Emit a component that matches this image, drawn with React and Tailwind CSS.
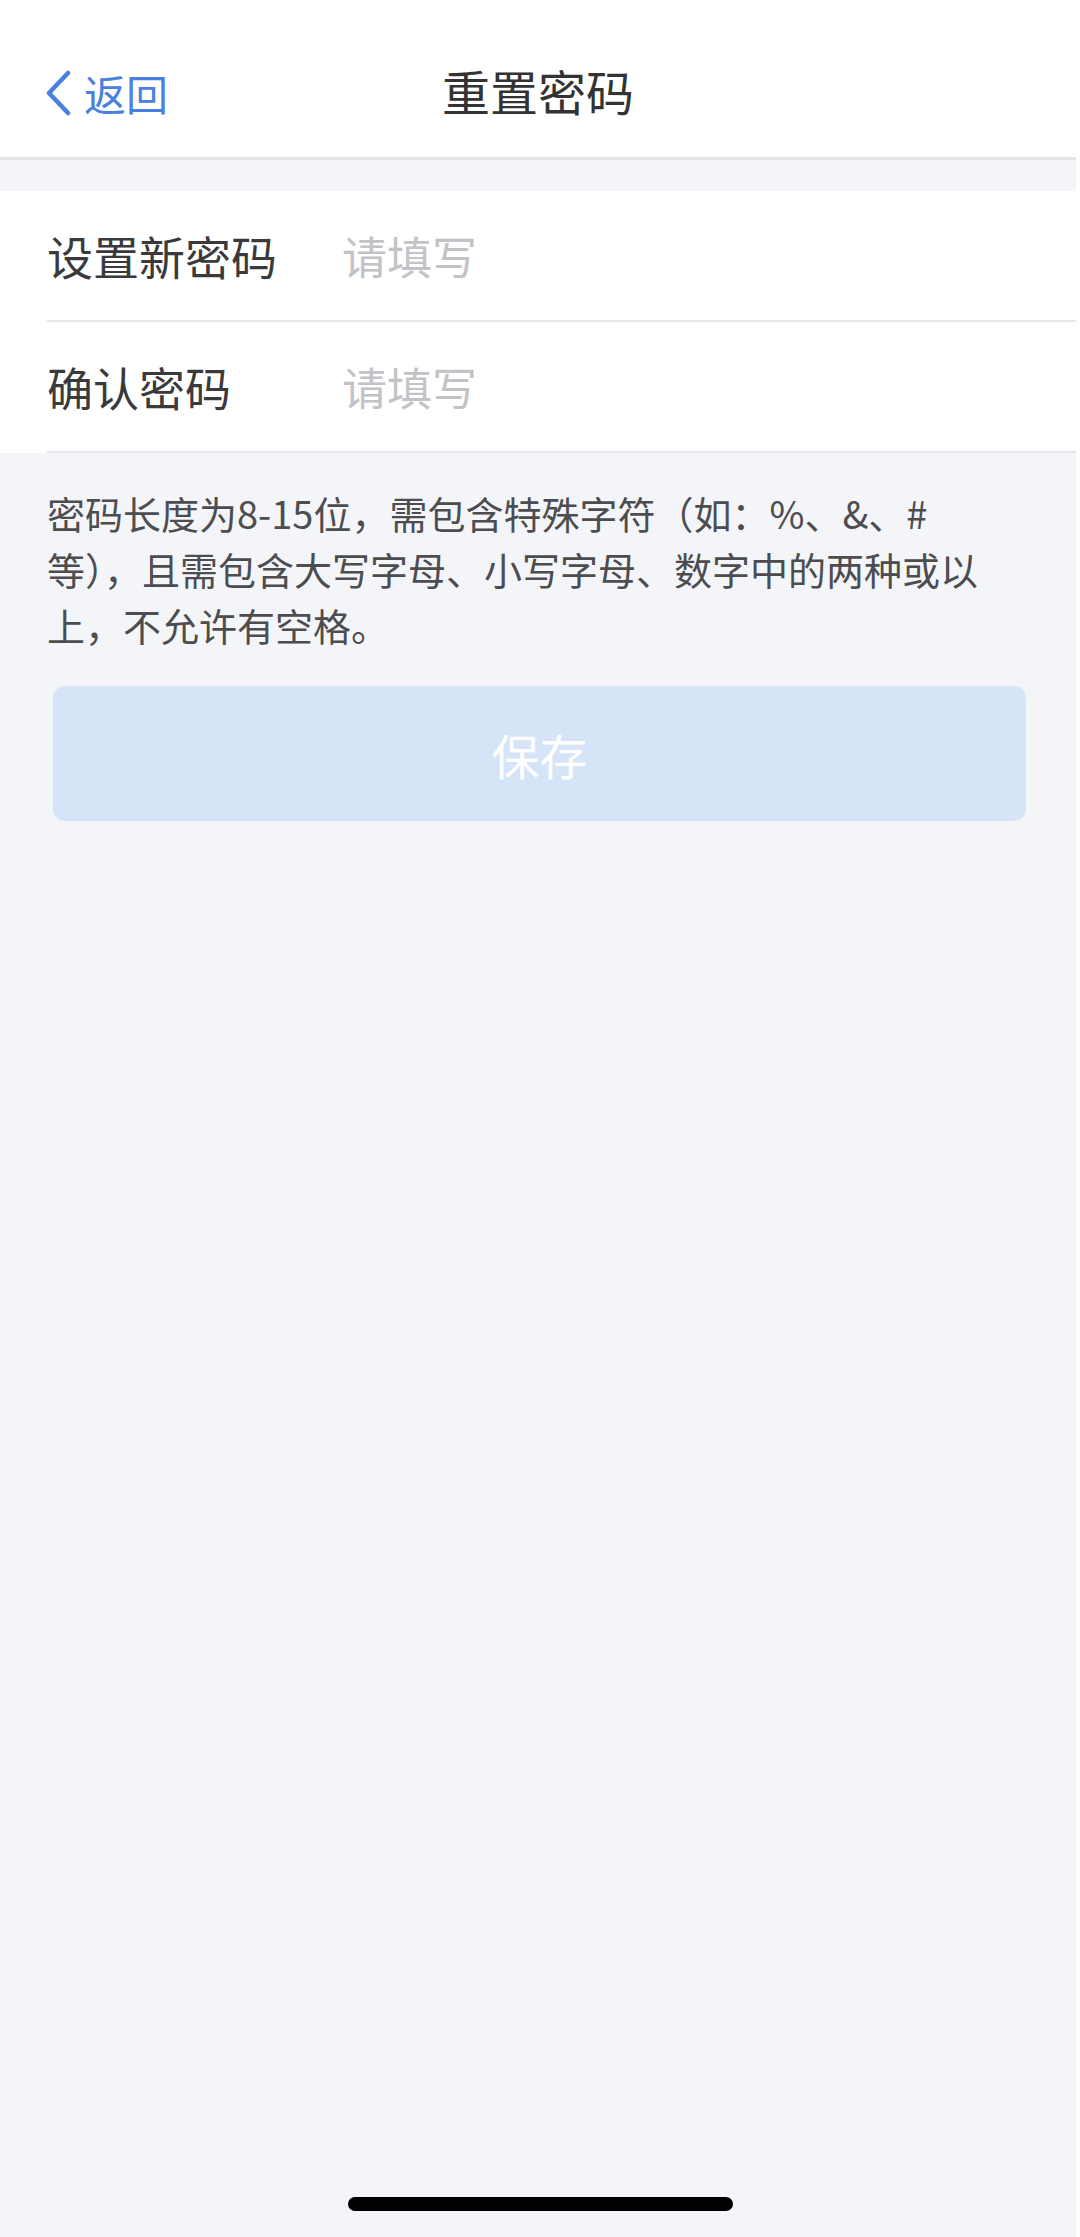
import React from 'react';

const font = { fontFamily: '"Noto Sans CJK SC", "Noto Sans", sans-serif' };

const Field = ({ label }) => (
  <div className="flex h-[131px] items-center pl-[47px]">
    <div className="flex h-full flex-1 items-center border-b-2 border-[#e6e7ea]">
      <span className="w-[295px] shrink-0 text-[46px] text-[#3a3a3c]">{label}</span>
      <input
        type="password"
        placeholder="请填写"
        className="min-w-0 flex-1 bg-transparent text-[45px] text-[#333] outline-none placeholder:text-[#c3c3c7]"
        style={font}
      />
    </div>
  </div>
);

const App = () => {
  return (
    <div className="flex min-h-[2237px] w-[1080px] bg-white" style={font}>
      <div className="flex w-[1076px] flex-col bg-[#f4f5f9]">
        {/* header */}
        <div className="relative flex h-[160px] shrink-0 items-center justify-center border-b-[3px] border-[#e3e4e8] bg-white pt-[22px]">
          <button className="absolute left-[44px] top-[70px] flex items-center gap-[12px] text-[#4a80e0]">
            <svg width="28" height="46" viewBox="0 0 28 46" fill="none">
              <path d="M24 3 L5 23 L24 43" stroke="#4a80e0" strokeWidth="4.5" strokeLinecap="round" strokeLinejoin="round" />
            </svg>
            <span className="text-[42px] leading-none">返回</span>
          </button>
          <h1 className="text-[48px] font-normal leading-none text-[#333]">重置密码</h1>
        </div>

        {/* form */}
        <div className="mt-[31px] bg-white">
          <Field label="设置新密码" />
          <Field label="确认密码" />
        </div>

        {/* hint */}
        <div className="px-[47px] pt-[32px] text-[38px] leading-[56px] text-[#4d4d50]">
          <p className="whitespace-nowrap">密码长度为8-15位，需包含特殊字符（如：%、&amp;、#</p>
          <p className="whitespace-nowrap">等），且需包含大写字母、小写字母、数字中的两种或以</p>
          <p className="whitespace-nowrap">上，不允许有空格。</p>
        </div>

        <div className="pl-[53px] pr-[50px] pt-[33px]">
          <button className="flex h-[135px] w-full items-center justify-center rounded-[12px] bg-[#d6e4f8] text-[48px] text-white">
            保存
          </button>
        </div>

        <div className="flex-1" />

        {/* home indicator */}
        <div className="mb-[26px] flex justify-center pl-[4px]">
          <div className="h-[14px] w-[385px] rounded-full bg-black" />
        </div>
      </div>
    </div>
  );
};

export default App;
